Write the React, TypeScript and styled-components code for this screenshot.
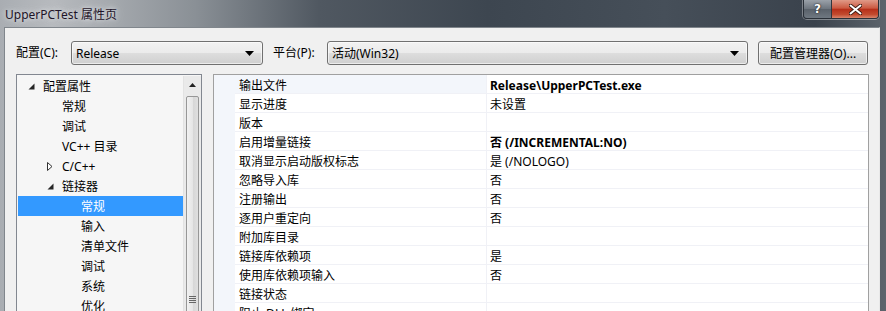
import styled, { createGlobalStyle } from "styled-components";

const GlobalStyle = createGlobalStyle`
    html, body {
        margin: 0;
        padding: 0;
        overflow: hidden;
    }
    body {
        font-family: "Noto Sans", "Noto Sans CJK SC", sans-serif;
        font-size: 12px;
        color: #000;
    }
`;

type TreeNode = {
    label: string;
    level: number;
    arrow?: "open" | "closed";
    selected?: boolean;
};

const treeNodes: TreeNode[] = [
    { label: "配置属性", level: 0, arrow: "open" },
    { label: "常规", level: 1 },
    { label: "调试", level: 1 },
    { label: "VC++ 目录", level: 1 },
    { label: "C/C++", level: 1, arrow: "closed" },
    { label: "链接器", level: 1, arrow: "open" },
    { label: "常规", level: 2, selected: true },
    { label: "输入", level: 2 },
    { label: "清单文件", level: 2 },
    { label: "调试", level: 2 },
    { label: "系统", level: 2 },
    { label: "优化", level: 2 },
];

type Prop = { name: string; value?: string; bold?: boolean; current?: boolean };

const props: Prop[] = [
    { name: "输出文件", value: "Release\\UpperPCTest.exe", bold: true, current: true },
    { name: "显示进度", value: "未设置" },
    { name: "版本" },
    { name: "启用增量链接", value: "否 (/INCREMENTAL:NO)", bold: true },
    { name: "取消显示启动版权标志", value: "是 (/NOLOGO)" },
    { name: "忽略导入库", value: "否" },
    { name: "注册输出", value: "否" },
    { name: "逐用户重定向", value: "否" },
    { name: "附加库目录" },
    { name: "链接库依赖项", value: "是" },
    { name: "使用库依赖项输入", value: "否" },
    { name: "链接状态" },
    { name: "阻止 DLL 绑定" },
];

function DropArrow() {
    return (
        <svg width="9" height="5" viewBox="0 0 9 5">
            <path d="M0 0 H9 L4.5 5 Z" fill="#000" />
        </svg>
    );
}

function TreeArrow({ kind }: { kind: "open" | "closed" }) {
    if (kind === "open") {
        return (
            <svg width="7" height="7" viewBox="0 0 7 7">
                <path d="M6.5 0.5 V6.5 H0.5 Z" fill="#262626" />
            </svg>
        );
    }
    return (
        <svg width="6" height="9" viewBox="0 0 6 9">
            <path d="M0.5 0.5 L5 4.5 L0.5 8.5 Z" fill="#fff" stroke="#333" strokeWidth="1" />
        </svg>
    );
}

export default function App() {
    return (
        <>
            <GlobalStyle />
            <Frame>
                <TitleBar>
                    <Title>UpperPCTest 属性页</Title>
                    <CaptionButtons>
                        <HelpButton>?</HelpButton>
                        <CloseButton>
                            <svg width="13" height="11" viewBox="0 0 13 11">
                                <path d="M1.5 1.5 L11.5 9.5 M11.5 1.5 L1.5 9.5" stroke="#3a1a12" strokeWidth="3.6" strokeLinecap="round" />
                                <path d="M1.5 1.5 L11.5 9.5 M11.5 1.5 L1.5 9.5" stroke="#fff" strokeWidth="2" strokeLinecap="round" />
                            </svg>
                        </CloseButton>
                    </CaptionButtons>
                </TitleBar>
                <Client>
                    <Toolbar>
                        <FieldLabel $width={55}>配置(C):</FieldLabel>
                        <Combo $width={192}>
                            <span>Release</span>
                            <DropArrow />
                        </Combo>
                        <FieldLabel $width={54} $gap={10}>平台(P):</FieldLabel>
                        <Combo $width={421}>
                            <span>活动(Win32)</span>
                            <DropArrow />
                        </Combo>
                        <PushButton>配置管理器(O)...</PushButton>
                    </Toolbar>
                    <Panels>
                        <TreePanel>
                            <TreeList>
                                {treeNodes.map((n, i) => (
                                    <TreeRow key={i} $level={n.level} $selected={!!n.selected}>
                                        <ArrowSlot>{n.arrow && <TreeArrow kind={n.arrow} />}</ArrowSlot>
                                        {n.label}
                                    </TreeRow>
                                ))}
                            </TreeList>
                            <ScrollBar>
                                <ScrollUp>
                                    <svg width="7" height="4" viewBox="0 0 7 4">
                                        <path d="M0 4 L3.5 0 L7 4 Z" fill="#222" />
                                    </svg>
                                </ScrollUp>
                                <Thumb>
                                    <Grip />
                                </Thumb>
                            </ScrollBar>
                        </TreePanel>
                        <GridPanel>
                            {props.map((p, i) => (
                                <GridRow key={i}>
                                    <Gutter />
                                    <NameCell $current={!!p.current}>{p.name}</NameCell>
                                    <ValueCell $bold={!!p.bold}>{p.value}</ValueCell>
                                </GridRow>
                            ))}
                        </GridPanel>
                    </Panels>
                </Client>
            </Frame>
        </>
    );
}

const Frame = styled.div`
    width: 886px;
    height: 311px;
    display: flex;
    flex-direction: column;
    overflow: hidden;
    background: linear-gradient(90deg, #a9adb2 0%, #b7babe 6%, #8a9096 22%, #505861 36%, #3d4650 55%, #464f59 75%, #3a424c 92%, #5d646c 100%);
`;

const TitleBar = styled.div`
    height: 27px;
    flex-shrink: 0;
    display: flex;
    align-items: flex-start;
    justify-content: space-between;
    padding: 0 7px 0 5px;
`;

const Title = styled.div`
    margin-top: 5px;
    font-size: 12px;
    color: #1e1428;
    text-shadow: 0 0 8px rgba(230, 232, 236, 0.9), 0 0 4px rgba(230, 232, 236, 0.9);
`;

const CaptionButtons = styled.div`
    display: flex;
    height: 18px;
    border: 1px solid #2a3038;
    border-top: none;
    border-radius: 0 0 4px 4px;
    overflow: hidden;
    box-shadow: 0 0 0 1px rgba(255, 255, 255, 0.35);
`;

const HelpButton = styled.div`
    width: 27px;
    display: flex;
    align-items: center;
    justify-content: center;
    font-family: "DejaVu Sans", sans-serif;
    font-weight: bold;
    font-size: 12px;
    color: #fff;
    text-shadow: 0 0 2px #222, 0 0 1px #222;
    background: linear-gradient(#9aa1a9, #6c747d 50%, #59616a 51%, #6f7881);
    border-right: 1px solid #30363e;
`;

const CloseButton = styled.div`
    width: 46px;
    display: flex;
    align-items: center;
    justify-content: center;
    background: linear-gradient(#e09a88, #cc5a42 45%, #b7301a 52%, #c24a2e 80%, #d9856c);
`;

const Client = styled.div`
    flex: 1;
    margin: 0 6px 0 4px;
    background: #f0f0f0;
    border-top: 1px solid #80868c;
    border-left: 1px solid #80868c;
    border-right: 1px solid #e8e8e8;
    overflow: hidden;
`;

const Toolbar = styled.div`
    display: flex;
    align-items: center;
    height: 24px;
    padding: 13px 0 0 11px;
`;

const FieldLabel = styled.div<{ $width: number; $gap?: number }>`
    width: ${p => p.$width}px;
    margin-left: ${p => p.$gap ?? 0}px;
    flex-shrink: 0;
    line-height: 24px;
`;

const Combo = styled.div<{ $width: number }>`
    width: ${p => p.$width}px;
    height: 24px;
    box-sizing: border-box;
    flex-shrink: 0;
    display: flex;
    align-items: center;
    justify-content: space-between;
    padding: 0 8px 0 4px;
    border: 1px solid #707070;
    border-radius: 3px;
    background: linear-gradient(#f2f2f2 0%, #ebebeb 48%, #dddddd 52%, #cfcfcf 100%);
    box-shadow: inset 0 0 0 1px rgba(255, 255, 255, 0.6);
`;

const PushButton = styled.div`
    width: 110px;
    height: 24px;
    margin-left: 10px;
    box-sizing: border-box;
    display: flex;
    align-items: center;
    justify-content: center;
    border: 1px solid #707070;
    border-radius: 3px;
    background: linear-gradient(#f2f2f2 0%, #ebebeb 48%, #dddddd 52%, #cfcfcf 100%);
    box-shadow: inset 0 0 0 1px rgba(255, 255, 255, 0.6);
`;

const Panels = styled.div`
    display: flex;
    gap: 11px;
    margin: 9px 0 0 11px;
    height: 260px;
`;

const TreePanel = styled.div`
    width: 186px;
    box-sizing: border-box;
    border: 1px solid #828790;
    background: #f6f6f6;
    display: flex;
    padding: 1px 0 0 1px;
`;

const TreeList = styled.div`
    flex: 1;
`;

const TreeRow = styled.div<{ $level: number; $selected: boolean }>`
    height: 20px;
    display: flex;
    align-items: center;
    padding-left: ${p => 10 + p.$level * 19}px;
    background: ${p => (p.$selected ? "#3399ff" : "transparent")};
    color: ${p => (p.$selected ? "#fff" : "#000")};
`;

const ArrowSlot = styled.span`
    width: 15px;
    display: flex;
    align-items: center;
`;

const ScrollBar = styled.div`
    width: 17px;
    display: flex;
    flex-direction: column;
    background: #eaeaea;
    border-left: 1px solid #e3e3e3;
`;

const ScrollUp = styled.div`
    height: 17px;
    display: flex;
    align-items: center;
    justify-content: center;
`;

const Thumb = styled.div`
    flex: 1;
    margin: 3px 2px 0 2px;
    border: 1px solid #979797;
    border-radius: 2px;
    background: linear-gradient(90deg, #f2f2f2, #e6e6e6 50%, #d6d6d6 51%, #e0e0e0);
    display: flex;
    align-items: flex-start;
    justify-content: center;
    padding-top: 199px;
`;

const Grip = styled.div`
    width: 7px;
    height: 7px;
    background: repeating-linear-gradient(#666 0 1px, transparent 1px 2px);
`;

const GridPanel = styled.div`
    width: 656px;
    box-sizing: border-box;
    border: 1px solid #a0a0a0;
    background: #fff;
    display: flex;
    flex-direction: column;
`;

const GridRow = styled.div`
    display: flex;
    height: 19px;
    flex-shrink: 0;
`;

const Gutter = styled.div`
    width: 21px;
    background: #f3f6fb;
`;

const NameCell = styled.div<{ $current: boolean }>`
    width: 252px;
    box-sizing: border-box;
    padding: 2px 0 0 4px;
    line-height: 17px;
    border-bottom: 1px solid #f0f1f6;
    border-right: 1px solid #f0f1f6;
    background: ${p => (p.$current ? "#f3f6fb" : "#fff")};
`;

const ValueCell = styled.div<{ $bold: boolean }>`
    flex: 1;
    padding: 2px 0 0 3px;
    line-height: 17px;
    border-bottom: 1px solid #f0f1f6;
    font-weight: ${p => (p.$bold ? 700 : 400)};
`;
